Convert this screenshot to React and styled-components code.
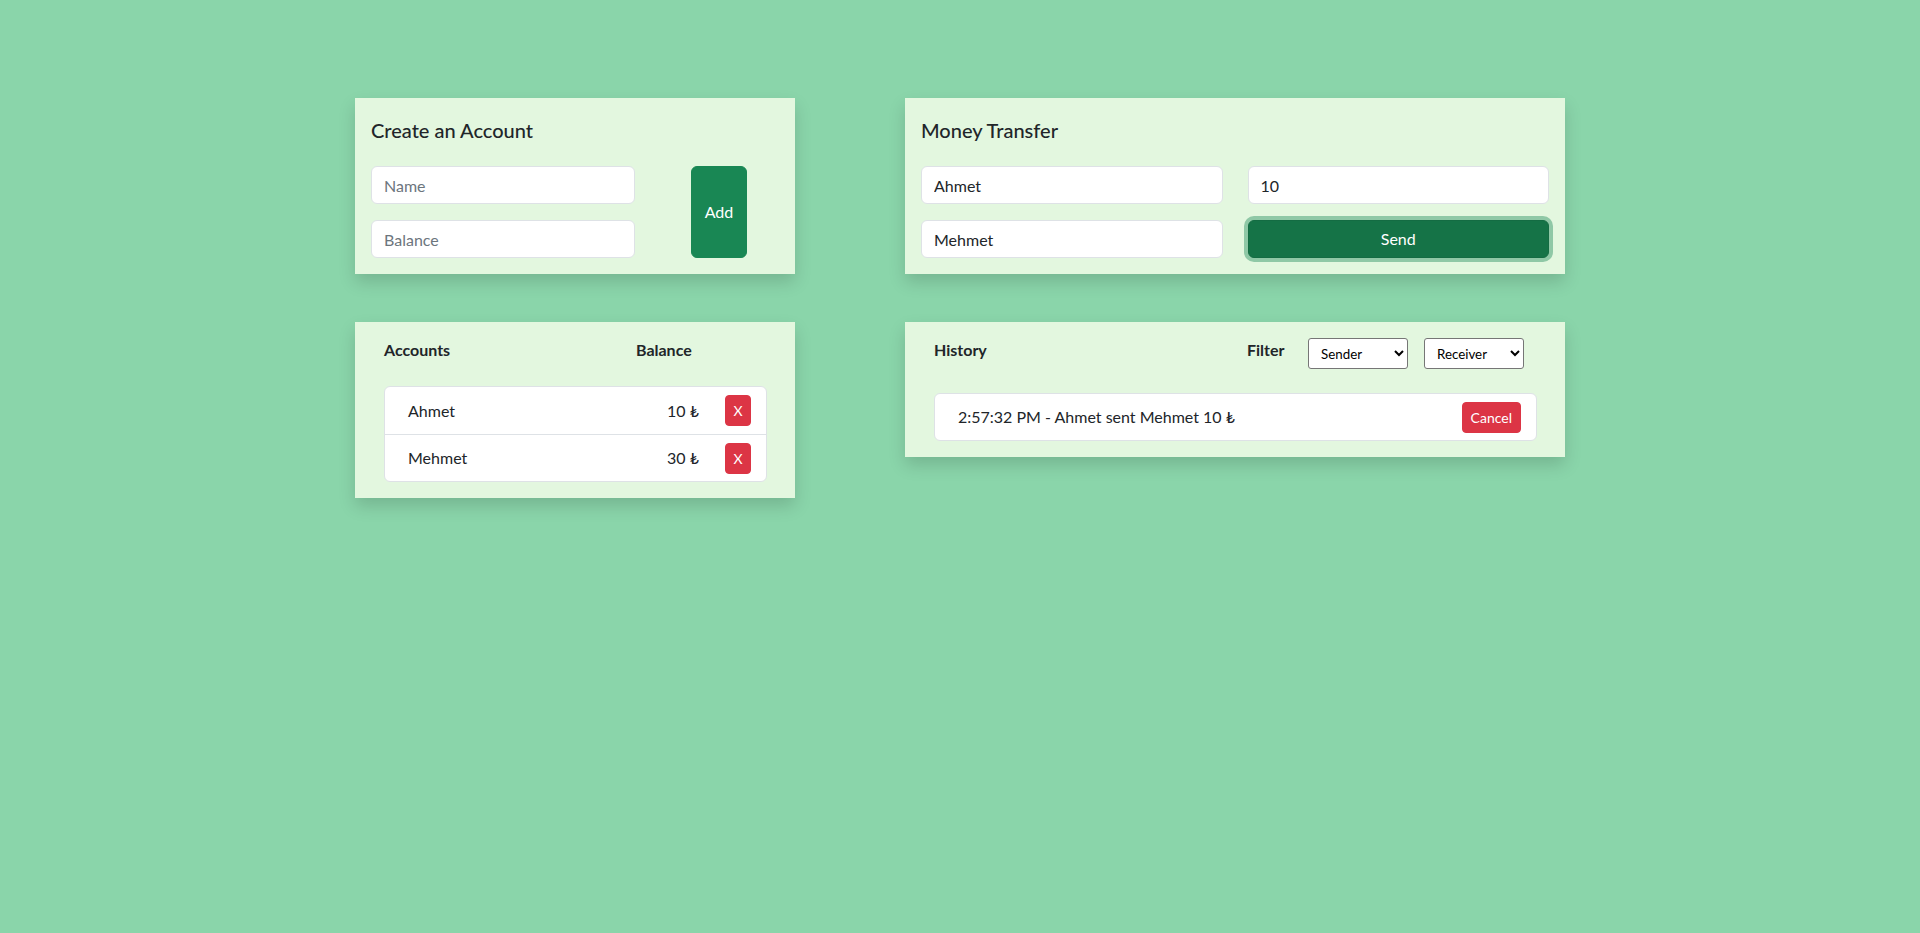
import React from "react";
import styled, { createGlobalStyle } from "styled-components";

const GlobalStyle = createGlobalStyle`
  * { box-sizing: border-box; }
  html, body { margin: 0; padding: 0; }
  body {
    background: #8ad5aa;
    font-family: Lato, "DejaVu Sans", sans-serif;
    color: #212529;
    font-size: 16px;
    line-height: 1.5;
  }
`;

const Page = styled.main`
  display: grid;
  grid-template-columns: 440px 660px;
  column-gap: 110px;
  row-gap: 48px;
  justify-content: center;
  align-content: start;
  align-items: start;
  padding-top: 98px;
  min-height: 933px;
`;

const Card = styled.section`
  background: #e3f7df;
  box-shadow: 0 8px 16px rgba(0, 0, 0, 0.15);
  padding: ${(p) => p.$pad || "16px"};
`;

const Title = styled.h5`
  margin: 4px 0 24px;
  font-size: 20px;
  font-weight: 500;
  line-height: 24px;
`;

const CreateForm = styled.div`
  display: flex;
  align-items: stretch;
`;

const Fields = styled.div`
  display: flex;
  flex-direction: column;
  gap: 16px;
  width: 264px;
`;

const Input = styled.input`
  display: block;
  width: 100%;
  height: 38px;
  padding: 6px 12px;
  font: inherit;
  font-size: 16px;
  color: #212529;
  background: #fff;
  border: 1px solid #dee2e6;
  border-radius: 6px;
  outline: none;
  &::placeholder { color: #6c757d; opacity: 1; }
`;

const Btn = styled.button`
  font: inherit;
  color: #fff;
  border: 1px solid ${(p) => p.$border};
  background: ${(p) => p.$bg};
  border-radius: ${(p) => (p.$small ? "4px" : "6px")};
  font-size: ${(p) => (p.$small ? "14px" : "16px")};
  line-height: ${(p) => (p.$small ? "21px" : "24px")};
  padding: ${(p) => (p.$small ? "4px 8px" : "6px 12px")};
  cursor: pointer;
`;

const AddButton = styled(Btn)`
  width: 56px;
  margin-left: 56px;
`;

const SendButton = styled(Btn)`
  height: 38px;
  box-shadow: 0 0 0 4px rgba(60, 153, 110, 0.5);
`;

const TransferGrid = styled.div`
  display: grid;
  grid-template-columns: 1fr 1fr;
  gap: 16px 25px;
`;

const Header = styled.div`
  display: flex;
  align-items: flex-start;
  margin-bottom: 24px;
  font-weight: 700;
  line-height: 24px;
`;

const HeadCell = styled.div`
  width: ${(p) => p.$w || "auto"};
  flex: none;
`;

const Select = styled.select`
  width: 100px;
  height: 31px;
  margin-right: ${(p) => p.$mr || "0"};
  font-family: inherit;
  font-size: 13.33px;
  font-weight: 400;
  color: #000;
  background: #fff;
  border: 1px solid #767676;
  border-radius: 3px;
  padding: 0 4px 0 8px;
`;

const ListBox = styled.ul`
  list-style: none;
  margin: 0;
  padding: 0;
  background: #fff;
  border: 1px solid #dee2e6;
  border-radius: 6px;
`;

const ListItem = styled.li`
  display: flex;
  align-items: center;
  height: ${(p) => p.$h || "47px"};
  padding: 0 15px 0 23px;
  & + & { border-top: 1px solid #dee2e6; }
`;

const Name = styled.span`
  flex: 1;
`;

const Amount = styled.span`
  margin-right: 26px;
`;

const XButton = styled(Btn)`
  width: 26px;
  height: 31px;
  padding: 0;
`;

const CancelButton = styled(Btn)`
  height: 31px;
`;

const accounts = [
  { name: "Ahmet", balance: 10 },
  { name: "Mehmet", balance: 30 },
];

export default function App() {
  return (
    <>
      <GlobalStyle />
      <Page>
        <Card>
          <Title>Create an Account</Title>
          <CreateForm>
            <Fields>
              <Input placeholder="Name" />
              <Input placeholder="Balance" />
            </Fields>
            <AddButton $bg="#198754" $border="#198754">Add</AddButton>
          </CreateForm>
        </Card>

        <Card>
          <Title>Money Transfer</Title>
          <TransferGrid>
            <Input defaultValue="Ahmet" />
            <Input defaultValue="10" />
            <Input defaultValue="Mehmet" />
            <SendButton $bg="#157347" $border="#146c43">Send</SendButton>
          </TransferGrid>
        </Card>

        <Card $pad="16px 28px 16px 29px">
          <Header>
            <HeadCell $w="252px">Accounts</HeadCell>
            <HeadCell>Balance</HeadCell>
          </Header>
          <ListBox>
            {accounts.map((a) => (
              <ListItem key={a.name}>
                <Name>{a.name}</Name>
                <Amount>{a.balance} ₺</Amount>
                <XButton $small $bg="#dc3545" $border="#dc3545">X</XButton>
              </ListItem>
            ))}
          </ListBox>
        </Card>

        <Card $pad="16px 28px 16px 29px">
          <Header>
            <HeadCell $w="313px">History</HeadCell>
            <HeadCell $w="61px">Filter</HeadCell>
            <Select $mr="16px" defaultValue="sender">
              <option value="sender">Sender</option>
            </Select>
            <Select defaultValue="receiver">
              <option value="receiver">Receiver</option>
            </Select>
          </Header>
          <ListBox>
            <ListItem $h="46px">
              <Name>2:57:32 PM - Ahmet sent Mehmet 10 ₺</Name>
              <CancelButton $small $bg="#dc3545" $border="#dc3545">Cancel</CancelButton>
            </ListItem>
          </ListBox>
        </Card>
      </Page>
    </>
  );
}
